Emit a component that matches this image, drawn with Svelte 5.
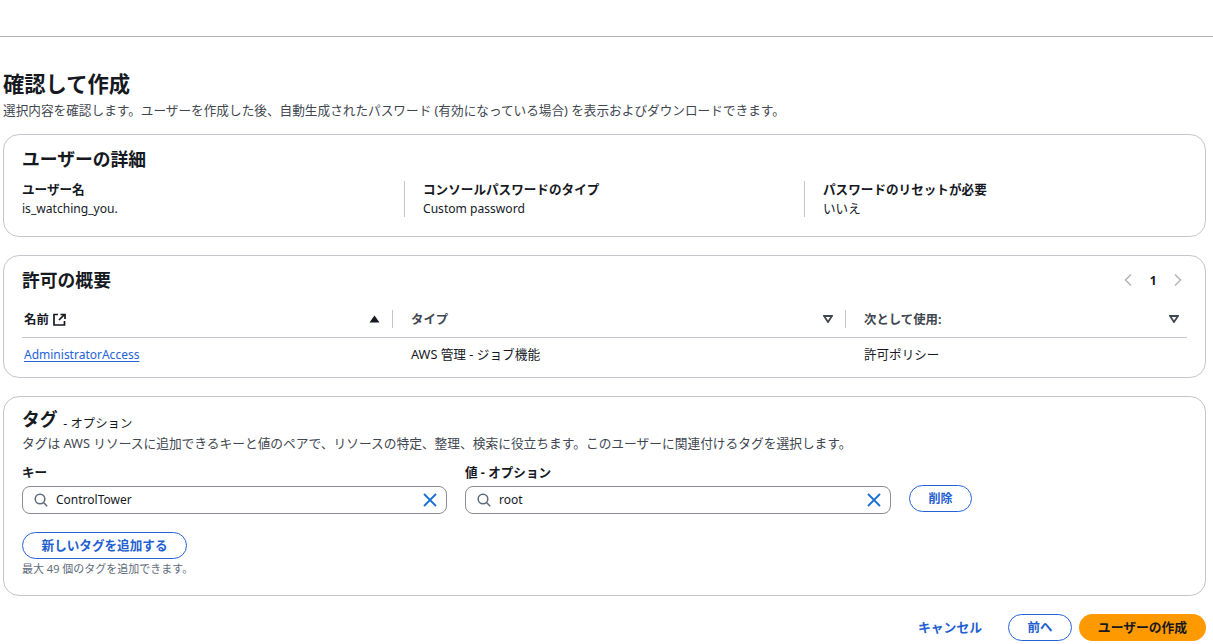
<script>
  const details = [
    { label: 'ユーザー名', value: 'is_watching_you.' },
    { label: 'コンソールパスワードのタイプ', value: 'Custom password' },
    { label: 'パスワードのリセットが必要', value: 'いいえ' }
  ];
  const tags = [
    { label: 'キー', value: 'ControlTower' },
    { label: '値 - オプション', value: 'root' }
  ];
</script>

<div class="page">
  <div class="topbar"></div>
  <header class="head">
    <h1>確認して作成</h1>
    <p>選択内容を確認します。ユーザーを作成した後、自動生成されたパスワード (有効になっている場合) を表示およびダウンロードできます。</p>
  </header>

  <section class="card c1">
    <h2>ユーザーの詳細</h2>
    <div class="cols">
      {#each details as d}
        <div class="col">
          <div class="lbl">{d.label}</div>
          <div class="val">{d.value}</div>
        </div>
      {/each}
    </div>
  </section>

  <section class="card c2">
    <div class="c2head">
      <h2>許可の概要</h2>
      <div class="pager">
        <svg width="10" height="14" viewBox="0 0 10 14"><path d="M8 1.500 2.500 7 8 12.500" fill="none" stroke="#b4b4bb" stroke-width="1.500"/></svg>
        <b>1</b>
        <svg width="10" height="14" viewBox="0 0 10 14"><path d="M2 1.500 7.500 7 2 12.500" fill="none" stroke="#b4b4bb" stroke-width="1.500"/></svg>
      </div>
    </div>
    <div class="thead">
      <div class="th t1">
        <span class="thl">名前
          <svg class="ext" width="13" height="13" viewBox="0 0 13 13"><path d="M5 1.500H1v10.500h10.500V8M7.500 1.500h4.500v4.500M11.500 1.500 6 7" fill="none" stroke="#16191f" stroke-width="1.700"/></svg>
        </span>
        <svg width="11" height="8" viewBox="0 0 11 8"><path d="M5.500.5 10.500 7.500H.5z" fill="#16191f"/></svg>
      </div>
      <div class="th t2">
        <span>タイプ</span>
        <svg width="10" height="8" viewBox="0 0 10 8"><path d="M1 1h8L5 7z" fill="none" stroke="#414750" stroke-width="1.800"/></svg>
      </div>
      <div class="th t3">
        <span>次として使用:</span>
        <svg width="10" height="8" viewBox="0 0 10 8"><path d="M1 1h8L5 7z" fill="none" stroke="#414750" stroke-width="1.800"/></svg>
      </div>
    </div>
    <div class="trow">
      <div class="td t1"><a href="#top">AdministratorAccess</a></div>
      <div class="td t2">AWS 管理 - ジョブ機能</div>
      <div class="td t3">許可ポリシー</div>
    </div>
  </section>

  <section class="card c3">
    <h2 class="taghead">タグ <span>- オプション</span></h2>
    <p class="tagdesc">タグは AWS リソースに追加できるキーと値のペアで、リソースの特定、整理、検索に役立ちます。このユーザーに関連付けるタグを選択します。</p>
    <div class="tagrow">
      {#each tags as t}
        <div class="field">
          <div class="lbl">{t.label}</div>
          <div class="input">
            <svg width="14" height="14" viewBox="0 0 14 14"><circle cx="6" cy="6" r="4.800" fill="none" stroke="#5f6b7a" stroke-width="1.500"/><path d="M9.500 9.500 13.200 13.200" stroke="#5f6b7a" stroke-width="1.500"/></svg>
            <span class="itext">{t.value}</span>
            <svg width="14" height="14" viewBox="0 0 14 14"><path d="M1 1 13 13M13 1 1 13" stroke="#1b6fd8" stroke-width="1.800"/></svg>
          </div>
        </div>
      {/each}
      <button class="btn del">削除</button>
    </div>
    <button class="btn add">新しいタグを追加する</button>
    <div class="hint">最大 49 個のタグを追加できます。</div>
  </section>

  <footer class="foot">
    <button class="link">キャンセル</button>
    <button class="btn prev">前へ</button>
    <button class="primary">ユーザーの作成</button>
  </footer>
</div>

<style>
  :global(body) { margin: 0; background: #fff; }
  .page {
    width: 1213px; height: 644px; overflow: hidden; box-sizing: border-box;
    font-family: "Noto Sans", "Noto Sans CJK JP", sans-serif;
    font-size: 12px; color: #16191f; padding: 0 7px 0 3px;
  }
  .topbar { height: 36px; border-bottom: 1px solid #b4b4bb; margin: 0 -7px 0 -3px; }
  .head { margin-top: 33px; height: 64px; }
  h1 { margin: 0; font-size: 21.300px; line-height: 28px; font-weight: 700; }
  .head p { margin: 3px 0 0; line-height: 18px; font-size: 12.650px; color: #414750; white-space: nowrap; }
  .card { border: 1px solid #c6c6cd; border-radius: 16px; box-sizing: border-box; padding: 0 18px; }
  h2 { margin: 0; font-size: 17.800px; line-height: 24px; font-weight: 700; }
  .c1 { height: 103px; padding-top: 12px; }
  .cols { display: grid; grid-template-columns: 382px 400px 1fr; margin-top: 10px; }
  .col { height: 34px; padding-top: 2px; border-left: 1px solid #c6c6cd; padding-left: 18px; }
  .col:first-child { border-left: 0; padding-left: 0; }
  .col .lbl { line-height: 14px; margin-bottom: 3px; }
  .lbl { font-size: 12.600px; font-weight: 700; line-height: 18px; white-space: nowrap; }
  .val { font-size: 12.100px; line-height: 18px; color: #16191f; }
  .col:last-child .val { font-size: 12.600px; }
  .c2 { height: 123px; margin-top: 18px; padding-top: 12px; }
  .c2head { display: flex; justify-content: space-between; align-items: center; height: 24px; }
  .pager { display: flex; align-items: center; gap: 16.500px; font-size: 12px; margin-right: 4px; }
  .thead, .trow { display: grid; grid-template-columns: 370px 453px 1fr; }
  .thead { margin-top: 18px; height: 27px; border-bottom: 1px solid #c6c6cd; font-weight: 700; font-size: 12.400px; color: #414750; }
  .th { display: flex; justify-content: space-between; align-items: center; height: 18px; padding: 0 0 0 18px; box-sizing: border-box; border-left: 1px solid #c6c6cd; }
  .th svg:last-child { margin-right: 12px; }
  .th.t1 { border-left: 0; padding-left: 2px; color: #16191f; }
  .th.t3 svg:last-child { margin-right: 8px; }
  .thl { display: inline-flex; align-items: center; gap: 4px; }
  .td { line-height: 34px; padding-left: 19px; font-size: 12.550px; }
  .td.t1 { padding-left: 2px; font-size: 12px; }
  .td.t2 { font-size: 12.700px; line-height: 32px; }
  a { color: #2563d9; text-decoration: underline; text-underline-offset: 2px; }
  .c3 { height: 200px; margin-top: 18px; padding-top: 10px; }
  .taghead { height: 24px; line-height: 24px; }
  .taghead span { font-size: 12.400px; font-weight: 400; margin-left: 1px; vertical-align: -2px; }
  .tagdesc { margin: 3px 0 0; line-height: 18px; color: #414750; font-size: 12.720px; white-space: nowrap; }
  .tagrow { display: flex; align-items: flex-end; gap: 18px; margin-top: 12px; }
  .field { width: 425px; }
  .field:nth-child(2) { width: 426px; }
  .input { height: 28px; box-sizing: border-box; border: 1px solid #8c8c94; border-radius: 8px; display: flex; align-items: center; gap: 8px; padding: 0 9px 0 11px; margin-top: 4px; font-size: 12px; }
  .itext { flex: 1; padding-bottom: 2px; }
  .btn { font-family: inherit; font-weight: 700; font-size: 12px; color: #1f5fd0; background: #fff; border: 1px solid #2563d9; border-radius: 14px; height: 27px; padding: 0 0 2px; cursor: pointer; }
  .del { width: 63px; margin-bottom: 2px; }
  .add { display: block; width: 165px; margin-top: 18px; font-size: 12.600px; }
  .hint { font-size: 11px; line-height: 16px; margin-top: 2px; color: #5f6b7a; }
  .foot { display: flex; justify-content: flex-end; align-items: center; margin-top: 18px; height: 27px; }
  .link { font-family: inherit; border: 0; background: none; color: #1f5fd0; font-weight: 700; font-size: 12.800px; padding: 0 0 2px; margin-right: 26px; }
  .prev { width: 64px; margin-right: 7px; font-size: 12.500px; }
  .primary { font-family: inherit; width: 127px; height: 27px; border: 0; border-radius: 14px; background: #ff9900; color: #16191f; font-weight: 700; font-size: 12.800px; padding: 0 0 2px; }
</style>
